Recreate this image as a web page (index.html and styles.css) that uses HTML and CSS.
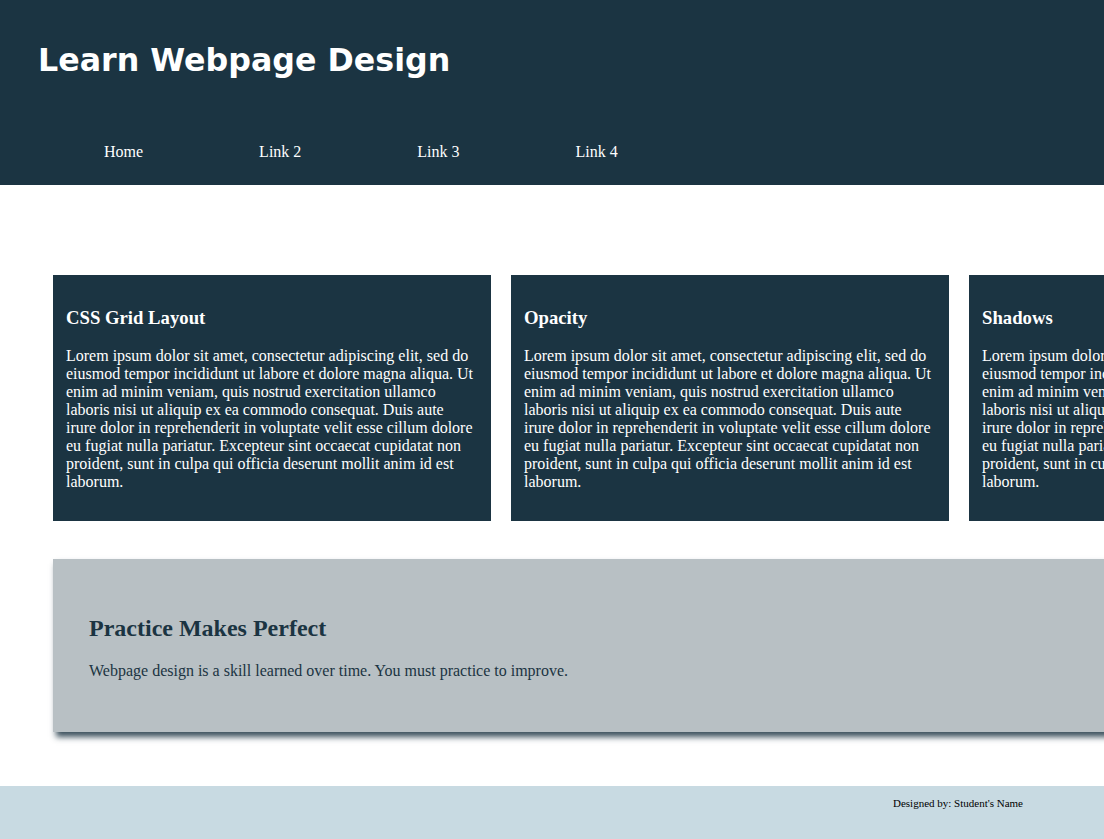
FILE: index.html
```html
<!DOCTYPE html>
<html lang="en">
<head>
<meta charset="utf-8">
<title>Learn Webpage Design</title>
<link rel="stylesheet" href="styles.css">
</head>
<body>
<div class="page">
  <header class="site-header">
    <h1 class="site-title">Learn Webpage Design</h1>
    <nav class="site-nav">
      <a href="#">Home</a>
      <a href="#">Link 2</a>
      <a href="#">Link 3</a>
      <a href="#">Link 4</a>
    </nav>
  </header>

  <main class="content">
    <section class="cards">
      <article class="card">
        <h3>CSS Grid Layout</h3>
        <p>Lorem ipsum dolor sit amet, consectetur adipiscing elit, sed do eiusmod tempor incididunt ut labore et dolore magna aliqua. Ut enim ad minim veniam, quis nostrud exercitation ullamco laboris nisi ut aliquip ex ea commodo consequat. Duis aute irure dolor in reprehenderit in voluptate velit esse cillum dolore eu fugiat nulla pariatur. Excepteur sint occaecat cupidatat non proident, sunt in culpa qui officia deserunt mollit anim id est laborum.</p>
      </article>
      <article class="card">
        <h3>Opacity</h3>
        <p>Lorem ipsum dolor sit amet, consectetur adipiscing elit, sed do eiusmod tempor incididunt ut labore et dolore magna aliqua. Ut enim ad minim veniam, quis nostrud exercitation ullamco laboris nisi ut aliquip ex ea commodo consequat. Duis aute irure dolor in reprehenderit in voluptate velit esse cillum dolore eu fugiat nulla pariatur. Excepteur sint occaecat cupidatat non proident, sunt in culpa qui officia deserunt mollit anim id est laborum.</p>
      </article>
      <article class="card">
        <h3>Shadows</h3>
        <p>Lorem ipsum dolor sit amet, consectetur adipiscing elit, sed do eiusmod tempor incididunt ut labore et dolore magna aliqua. Ut enim ad minim veniam, quis nostrud exercitation ullamco laboris nisi ut aliquip ex ea commodo consequat. Duis aute irure dolor in reprehenderit in voluptate velit esse cillum dolore eu fugiat nulla pariatur. Excepteur sint occaecat cupidatat non proident, sunt in culpa qui officia deserunt mollit anim id est laborum.</p>
      </article>
    </section>

    <section class="practice">
      <h2>Practice Makes Perfect</h2>
      <p>Webpage design is a skill learned over time. You must practice to improve.</p>
    </section>
  </main>

  <footer class="site-footer">
    <p>Designed by: Student's Name</p>
  </footer>
</div>
</body>
</html>
```

FILE: styles.css
```css
html, body {
  margin: 0;
  padding: 0;
  overflow-x: hidden;
}

body {
  font-family: "Liberation Serif", "Times New Roman", serif;
  font-size: 16px;
  background: #ffffff;
}

.page {
  width: 1104px;
}

.site-header {
  background: #1b3442;
  padding: 42px 0 24px 38px;
}

.site-title {
  margin: 0 0 65px;
  font-family: "DejaVu Sans", Verdana, sans-serif;
  font-weight: bold;
  font-size: 31.7px;
  color: #ffffff;
}

.site-nav {
  display: flex;
  gap: 116px;
  padding-left: 66px;
}

.site-nav a {
  color: #ffffff;
  text-decoration: none;
}

.content {
  padding: 90px 0 54px 53px;
}

.cards {
  display: grid;
  grid-template-columns: repeat(3, 438px);
  gap: 20px;
}

.card {
  background: #1b3442;
  color: #ffffff;
  padding: 13px 16px 14px 13px;
}

.card h3 {
  font-size: 18.72px;
  margin: 18.72px 0;
}

.card p {
  margin: 16px 0;
}

.practice {
  margin-top: 38px;
  width: 1282px;
  background: #b8c0c4;
  color: #1b3442;
  padding: 36px 36px 36px;
  box-shadow: 3px 5px 6px rgba(27, 52, 66, 0.85);
}

.practice h2 {
  font-size: 24px;
  margin: 19.92px 0;
}

.practice p {
  margin: 16px 0;
}

.site-footer {
  background: #c8dae2;
  padding: 11px 0 60px 893px;
}

.site-footer p {
  margin: 0;
  font-size: 11px;
  color: #000000;
}
```
